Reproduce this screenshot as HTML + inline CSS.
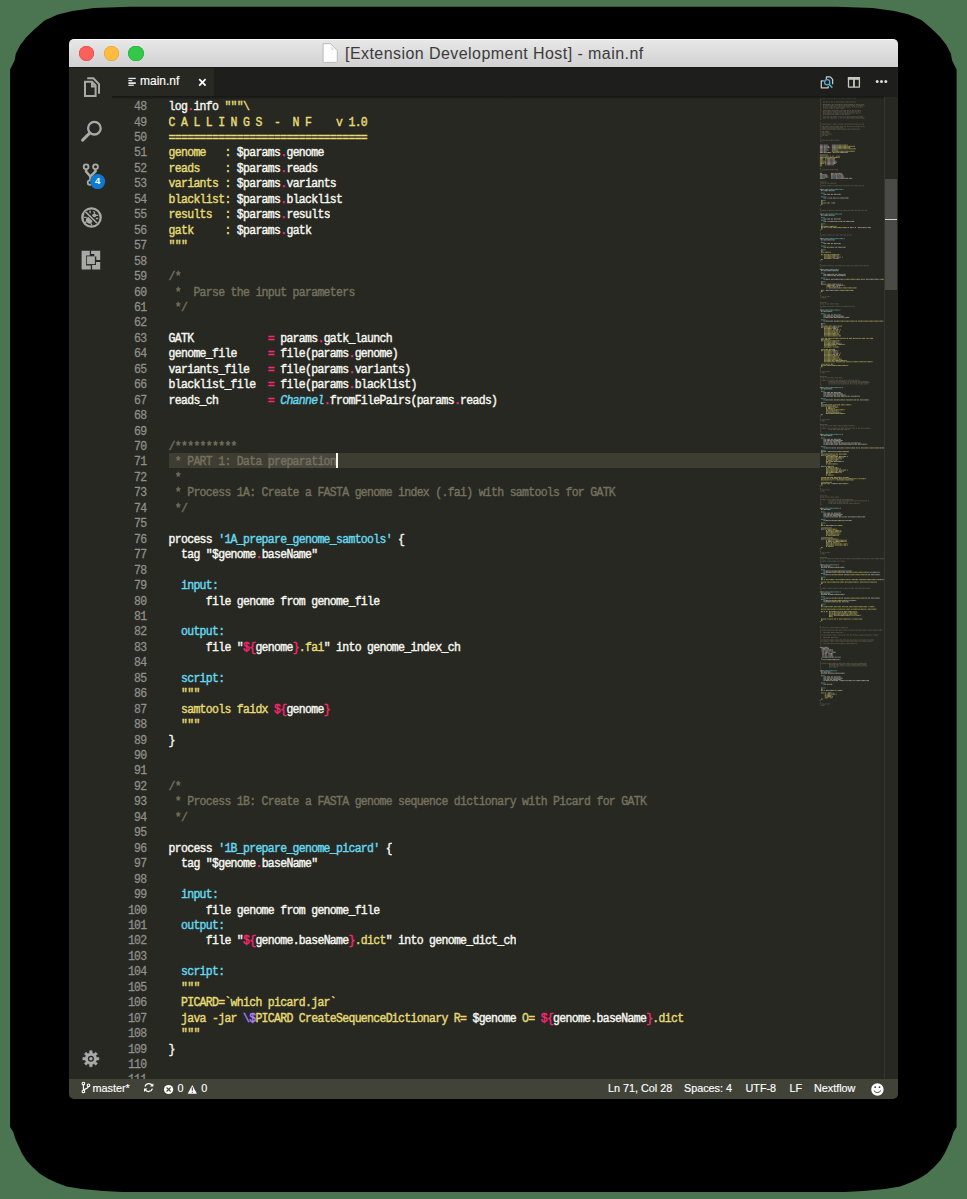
<!DOCTYPE html>
<html><head><meta charset="utf-8"><style>
html,body{margin:0;padding:0;width:967px;height:1199px;overflow:hidden;background:#4b7550;position:relative;}
div,span{box-sizing:border-box;}
.a{position:absolute;}
#shadow{position:absolute;left:10px;top:7px;width:947px;height:1185px;background:#000;border-radius:95px / 64px;}
#title{position:absolute;left:69px;top:39.3px;width:829px;height:28.5px;background:linear-gradient(#e7e7e7 0,#dedede 40%,#d2d1d3 100%);border-radius:5px 5px 0 0;border-top:1.5px solid #f9f9f9;border-bottom:1.2px solid #1a1a18;}
.tl{position:absolute;top:45.6px;width:15.2px;height:15.2px;border-radius:50%;}
#ttext{position:absolute;left:345px;top:44.5px;font:16px "Liberation Sans",sans-serif;letter-spacing:0.44px;color:#3b3b3b;white-space:pre;}
#body{position:absolute;left:69px;top:67px;width:829px;height:1012px;background:#272822;}
#tabs{position:absolute;left:112px;top:67.5px;width:786px;height:29px;background:#1e1f1c;}
#tab{position:absolute;left:112px;top:67.5px;width:102px;height:28.5px;background:#272822;}
#tabtext{position:absolute;left:140px;top:74px;font:12px "Liberation Sans",sans-serif;color:#fff;white-space:pre;-webkit-text-stroke:0.15px #fff;}
#status{position:absolute;left:69px;top:1079px;width:829px;height:20px;background:#414339;border-radius:0 0 5px 5px;}
.st{position:absolute;top:1082px;font:10.8px "Liberation Sans",sans-serif;color:#fff;white-space:pre;-webkit-text-stroke:0.15px #fff;}
.ln{position:absolute;left:113px;width:33.5px;text-align:right;height:15.45px;line-height:15.45px;font:11.5px "Liberation Mono",monospace;letter-spacing:-0.7px;-webkit-text-stroke:0.25px currentColor;color:#90908a;white-space:pre;transform:scaleY(1.12);transform-origin:0 4px;}
.cl{position:absolute;left:168.6px;height:15.45px;line-height:15.45px;font:11.5px "Liberation Mono",monospace;letter-spacing:-0.7px;-webkit-text-stroke:0.38px currentColor;color:#f8f8f2;white-space:pre;transform:scaleY(1.12);transform-origin:0 4px;}
.y{color:#e6db74}.w{color:#f8f8f2}.p{color:#f92672}.c{color:#66d9ef}.u{color:#ae81ff}.m{color:#75715e}.i{color:#66d9ef;font-style:italic}
.sel{color:#75715e;background:#49483e}
#hl{position:absolute;left:169px;top:452.9px;width:651px;height:15.3px;background:#3e3d32;}
#cursor{position:absolute;left:335.5px;top:452.9px;width:2px;height:15.3px;background:#f8f8f0;}
#edclip{position:absolute;left:112px;top:97px;width:786px;height:982px;overflow:hidden;}
#scroll{position:absolute;left:884px;top:97px;width:14px;height:982px;border-left:1px solid #34352f;}
#slider{position:absolute;left:885px;top:178.7px;width:12px;height:111.5px;background:#4a4b46;}
#tabshadow{position:absolute;left:112px;top:96px;width:772px;height:2.5px;background:linear-gradient(#171814,rgba(23,24,20,0.3));}
.ic{position:absolute;left:0;top:0;}
</style></head><body>
<svg class="ic" width="967" height="1199"><path d="M10.1 69.5 L14.5 60.8 L15.9 53.6 L20.3 44.9 L26.1 37.6 L34.7 29.0 L44.9 20.3 L57.9 14.5 L72.4 10.9 L94.1 8.0 L130.3 6.8 L836.4 6.8 L872.6 8.0 L894.3 10.9 L908.8 14.5 L921.8 20.3 L932.0 29.0 L940.6 37.6 L946.4 44.9 L950.8 53.6 L952.2 60.8 L956.6 69.5 L956.6 1127.0 L953.5 1132.0 L951.0 1139.7 L947.9 1146.5 L944.8 1153.3 L940.4 1160.2 L934.2 1167.0 L926.8 1173.8 L918.7 1178.8 L909.4 1183.1 L900.1 1186.5 L884.9 1189.0 L863.2 1191.0 L844.4 1192.0 L122.3 1192.0 L103.5 1191.0 L81.8 1189.0 L66.6 1186.5 L57.3 1183.1 L48.0 1178.8 L39.9 1173.8 L32.5 1167.0 L26.3 1160.2 L21.9 1153.3 L18.8 1146.5 L15.7 1139.7 L13.2 1132.0 L10.1 1127.0Z" fill="#000"/></svg>
<div id="body"></div>
<div id="title"></div>
<div class="tl" style="left:79px;background:#fc605c;box-shadow:inset 0 0 0 0.6px #df4744"></div>
<div class="tl" style="left:103.7px;background:#fdbc40;box-shadow:inset 0 0 0 0.6px #de9f34"></div>
<div class="tl" style="left:128.4px;background:#34c84a;box-shadow:inset 0 0 0 0.6px #27aa35"></div>
<svg class="ic" width="967" height="80"><path d="M323.1 43.7H330.5L337.3 50.5V61.5Q337.3 62.4 336.4 62.4H324Q323.1 62.4 323.1 61.5Z" fill="#fdfdfd" stroke="#b4b4b4" stroke-width="0.9"/><path d="M331.3 46.6L334.4 49.7H331.3Z" fill="#dcdcdc"/></svg>
<div id="ttext">[Extension Development Host] - main.nf</div>
<div id="tabs"></div>
<div id="tab"></div>
<div id="tabtext">main.nf</div>
<svg class="ic" width="967" height="300">
 <g fill="#e6e6e6"><rect x="128.4" y="77.8" width="7.4" height="1.3"/><rect x="128.4" y="80" width="4" height="1.2"/><rect x="128.4" y="82.2" width="7.4" height="1.8"/><rect x="128.4" y="84.7" width="5.4" height="1.2"/></g>
 <path d="M199.2 79.2L205.6 85.6M205.6 79.2L199.2 85.6" stroke="#fff" stroke-width="1.7"/>
 <!-- activity icons -->
 <g fill="none" stroke="#a9a9a5" stroke-width="2">
  <path d="M85 81.7H92L95.6 85.4V96H85Z"/>
  <path d="M92 81.7V86.4H95.6"/>
  <path d="M87.2 78.3H93.4L99 84.1V93.7"/>
  <circle cx="94.4" cy="128.2" r="6.3" stroke-width="2.3"/>
  <path d="M89.4 133.4L82.6 140.1" stroke-width="3" stroke-linecap="round"/>
  <circle cx="86.1" cy="166.7" r="2.4" stroke-width="1.8"/>
  <circle cx="95.5" cy="166.7" r="2.4" stroke-width="1.8"/>
  <circle cx="90" cy="182.6" r="2.3" stroke-width="1.8"/>
  <path d="M86.1 169.2V171.5L90.4 176.4V180.3M95.5 169.2V171.5L90.4 176.4" stroke-width="2.5"/>
  <circle cx="91.5" cy="217.5" r="9.2" stroke-width="2.3"/>
 </g>
 <g fill="#a9a9a5">
  <path d="M92 81.7L95.6 85.4H92Z"/>
  <ellipse cx="89.2" cy="220.3" rx="3.1" ry="3.4" transform="rotate(-40 89.2 220.3)"/>
  <ellipse cx="94.3" cy="215.3" rx="2.1" ry="1.9"/>
  <path d="M90.1 210.6V213.2M93.6 211.2L94.9 213.3M95.3 215.4H98.2M95.8 218.5H98.2M83.6 217.4H86.6M91 223.4L91.9 225.4M84.6 222.8L86.6 221.6" stroke="#a9a9a5" stroke-width="1.3" fill="none"/>
  <path d="M85.3 211.6L97.2 223.2" stroke="#272822" stroke-width="3.4"/>
  <path d="M85.3 211.6L97.2 223.2" stroke="#a9a9a5" stroke-width="1.6"/>
  <path d="M81.6 250.7H89.8V255.4H86.1V265.5H90.8V269.5H81.6Z"/>
  <rect x="86.9" y="256.3" width="8" height="7.8"/>
  <path d="M91.1 250.7H100.2V259.9H96.3V256.4H94.3V254H91.1Z"/>
  <path d="M96 261.9H100.2V269.5H92.1V265H96Z"/>
 </g>
 <g fill="#0e7ad0"><circle cx="97.7" cy="181.6" r="7.5"/></g>
 <text x="97.6" y="184.4" font-family="Liberation Sans" font-weight="bold" font-size="9.5" fill="#fff" text-anchor="middle">4</text>
 <!-- right tab icons -->
 <g fill="none" stroke="#c8c8c3" stroke-width="1.3" stroke-linejoin="round">
  <path d="M826.4 79.6V76.9H830.2L832.6 79.4V84.3"/>
  <path d="M823.8 80.9H821.3V87.8H828.2V86.3"/>
  <rect x="848.5" y="77.6" width="10.9" height="9.5" stroke-width="1.3"/>
  <path d="M853.95 78V87" stroke-width="1.8"/>
 </g>
 <rect x="847.9" y="77" width="12.1" height="2.8" fill="#c8c8c3"/>
 <g fill="none" stroke="#56aee0" stroke-width="1.3"><circle cx="827.2" cy="82.2" r="2.6"/><path d="M829.1 84.2L832.3 87.7" stroke-width="1.5"/></g>
 <g fill="#dcdcd8"><circle cx="877.2" cy="81.6" r="1.5"/><circle cx="881.5" cy="81.6" r="1.5"/><circle cx="885.8" cy="81.6" r="1.5"/></g>
</svg>
<div id="hl"></div>
<svg class="ic" width="967" height="1199" style="pointer-events:none">
<path d="M819.9 97.10h1.2M820.5 98.33h0.6M821.7 98.33h5.5M827.9 98.33h1.8M830.4 98.33h3.1M834.0 98.33h3.7M838.4 98.33h1.8M840.8 98.33h4.3M845.7 98.33h6.1M852.5 98.33h3.7M820.5 99.56h0.6M820.5 100.79h0.6M820.5 102.02h0.6M823.0 102.02h2.5M826.0 102.02h2.5M829.1 102.02h1.2M831.0 102.02h2.5M834.0 102.02h1.2M835.9 102.02h8.0M844.5 102.02h4.9M850.0 102.02h1.8M852.5 102.02h3.1M820.5 103.25h0.6M820.5 104.49h0.6M823.0 104.49h6.8M830.4 104.49h1.2M832.2 104.49h2.5M835.3 104.49h5.5M841.4 104.49h1.8M843.9 104.49h1.8M846.3 104.49h7.4M854.3 104.49h1.2M856.2 104.49h3.7M860.5 104.49h3.7M820.5 105.72h0.6M823.0 105.72h1.2M824.8 105.72h3.1M828.5 105.72h1.8M831.0 105.72h3.1M834.7 105.72h1.2M836.5 105.72h1.8M839.0 105.72h1.8M841.4 105.72h4.3M846.3 105.72h3.7M850.6 105.72h4.3M855.6 105.72h1.2M857.4 105.72h5.5M863.6 105.72h1.2M820.5 106.95h0.6M823.0 106.95h1.8M825.4 106.95h2.5M828.5 106.95h4.9M834.0 106.95h6.8M841.4 106.95h3.7M845.7 106.95h4.3M850.6 106.95h0.6M851.9 106.95h1.2M853.7 106.95h1.8M856.2 106.95h4.9M861.7 106.95h1.2M820.5 108.18h0.6M823.0 108.18h1.8M825.4 108.18h2.5M828.5 108.18h4.3M833.4 108.18h1.8M835.9 108.18h3.1M839.6 108.18h4.9M820.5 109.41h0.6M820.5 110.64h0.6M823.0 110.64h6.8M830.4 110.64h1.2M832.2 110.64h6.8M839.6 110.64h1.2M841.4 110.64h1.8M843.9 110.64h2.5M847.0 110.64h2.5M850.0 110.64h1.2M851.9 110.64h2.5M855.0 110.64h1.2M856.8 110.64h4.3M820.5 111.87h0.6M823.0 111.87h1.8M825.4 111.87h4.3M830.4 111.87h1.8M832.8 111.87h5.5M839.0 111.87h4.3M843.9 111.87h2.5M847.0 111.87h1.8M849.4 111.87h4.3M854.3 111.87h4.9M859.9 111.87h1.2M820.5 113.10h0.6M823.0 113.10h9.2M832.8 113.10h1.2M834.7 113.10h4.3M839.6 113.10h1.8M842.0 113.10h0.6M843.3 113.10h6.1M850.0 113.10h4.9M856.2 113.10h1.8M858.6 113.10h1.8M820.5 114.33h0.6M823.0 114.33h1.8M825.4 114.33h4.3M830.4 114.33h3.7M834.7 114.33h4.3M839.6 114.33h1.8M842.0 114.33h2.5M845.1 114.33h4.9M820.5 115.56h0.6M820.5 116.80h0.6M823.0 116.80h1.8M825.4 116.80h3.7M829.7 116.80h2.5M832.8 116.80h4.9M838.4 116.80h0.6M839.6 116.80h2.5M842.7 116.80h1.2M844.5 116.80h1.8M847.0 116.80h1.8M849.4 116.80h4.3M854.3 116.80h3.7M858.6 116.80h4.3M820.5 118.03h0.6M823.0 118.03h3.1M826.7 118.03h2.5M829.7 118.03h7.4M838.4 118.03h1.2M840.2 118.03h2.5M843.3 118.03h1.8M845.7 118.03h19.1M820.5 119.26h1.2M819.9 122.95h1.2M820.5 124.18h0.6M821.7 124.18h8.0M830.4 124.18h0.6M831.6 124.18h0.6M832.8 124.18h4.9M838.4 124.18h4.9M843.9 124.18h1.8M846.3 124.18h4.3M851.3 124.18h4.3M856.2 124.18h2.5M859.3 124.18h1.8M861.7 124.18h2.5M820.5 125.41h0.6M820.5 126.64h0.6M821.7 126.64h2.5M824.8 126.64h4.9M830.4 126.64h2.5M833.4 126.64h6.1M840.2 126.64h3.1M843.9 126.64h2.5M847.0 126.64h1.8M849.4 126.64h2.5M852.5 126.64h2.5M855.6 126.64h4.9M861.1 126.64h1.2M862.9 126.64h1.8M820.5 127.88h0.6M821.7 127.88h4.3M826.7 127.88h2.5M829.7 127.88h3.7M834.0 127.88h2.5M837.1 127.88h6.1M820.5 129.11h0.6M821.7 129.11h38.1M820.5 130.34h0.6M820.5 131.57h0.6M821.7 131.57h2.5M824.8 131.57h4.3M820.5 132.80h0.6M821.7 132.80h3.7M826.0 132.80h4.3M820.5 134.03h0.6M821.7 134.03h3.1M825.4 134.03h1.2M827.3 134.03h4.3M820.5 135.26h0.6M821.7 135.26h2.5M824.8 135.26h3.7M820.5 136.49h1.2M819.9 138.95h1.2M820.5 140.19h0.6M821.7 140.19h3.7M826.0 140.19h1.8M828.5 140.19h4.3M833.4 140.19h6.1M820.5 141.42h1.2M819.9 168.50h1.2M820.5 169.73h0.6M822.4 169.73h3.1M826.0 169.73h1.8M828.5 169.73h3.1M832.2 169.73h6.2M820.5 170.96h1.2M819.9 182.04h6.8M820.5 183.27h0.6M821.7 183.27h2.5M824.8 183.27h1.2M826.7 183.27h2.5M829.7 183.27h6.8M820.5 184.50h0.6M820.5 185.73h0.6M821.7 185.73h4.3M826.7 185.73h1.8M829.1 185.73h3.7M833.4 185.73h0.6M834.7 185.73h3.1M838.4 185.73h3.7M842.7 185.73h3.1M846.3 185.73h3.7M850.6 185.73h2.5M853.7 185.73h4.9M859.3 185.73h1.8M861.7 185.73h2.5M820.5 186.96h1.2M819.9 209.12h1.2M820.5 210.35h0.6M821.7 210.35h4.3M826.7 210.35h1.8M829.1 210.35h3.7M833.4 210.35h0.6M834.7 210.35h3.1M838.4 210.35h3.7M842.7 210.35h4.9M848.2 210.35h6.1M855.0 210.35h2.5M858.0 210.35h3.7M862.3 210.35h1.8M864.8 210.35h2.5M820.5 211.58h1.2M819.9 233.74h1.2M820.5 234.97h0.6M821.7 234.97h4.3M826.7 234.97h1.8M829.1 234.97h3.7M833.4 234.97h1.8M835.9 234.97h3.7M840.2 234.97h3.1M843.9 234.97h2.5M847.0 234.97h1.8M849.4 234.97h2.5M820.5 236.20h1.2M819.9 264.52h1.2M820.5 265.75h0.6M821.7 265.75h4.3M826.7 265.75h1.8M829.1 265.75h3.7M833.4 265.75h0.6M834.7 265.75h2.5M837.7 265.75h6.1M844.5 265.75h1.8M847.0 265.75h4.9M852.5 265.75h1.8M855.0 265.75h4.3M859.9 265.75h1.8M862.3 265.75h1.2M864.2 265.75h4.9M820.5 266.98h1.2M819.9 295.29h1.2M820.5 296.52h0.6M822.4 296.52h1.8M824.8 296.52h1.2M826.7 296.52h2.5M829.7 296.52h0.6M820.5 297.75h6.1M819.9 302.68h6.8M820.5 303.91h0.6M821.7 303.91h2.5M824.8 303.91h1.2M826.7 303.91h2.5M829.7 303.91h4.3M834.7 303.91h4.3M820.5 305.14h0.6M820.5 306.37h0.6M821.7 306.37h4.3M826.7 306.37h1.2M828.5 306.37h3.1M832.2 306.37h4.3M837.1 306.37h3.1M840.8 306.37h1.2M842.7 306.37h1.8M845.1 306.37h3.7M849.4 306.37h2.5M852.5 306.37h2.5M820.5 307.60h1.2M819.9 370.38h1.2M820.5 371.61h0.6M822.4 371.61h1.8M824.8 371.61h1.2M826.7 371.61h2.5M829.7 371.61h0.6M820.5 372.84h4.3M819.9 376.54h6.8M820.5 377.77h0.6M821.7 377.77h2.5M824.8 377.77h1.2M826.7 377.77h2.5M829.7 377.77h4.3M834.7 377.77h3.7M839.0 377.77h3.1M820.5 379.00h0.6M820.5 380.23h0.6M821.7 380.23h4.3M826.7 380.23h1.2M828.5 380.23h3.1M832.2 380.23h3.1M835.9 380.23h2.5M839.0 380.23h4.3M843.9 380.23h1.2M845.7 380.23h1.2M847.6 380.23h3.1M851.3 380.23h3.1M855.0 380.23h4.3M820.5 381.46h0.6M828.5 381.46h4.3M833.4 381.46h1.8M835.9 381.46h1.8M838.4 381.46h3.1M842.0 381.46h3.7M846.3 381.46h0.6M847.6 381.46h1.2M849.4 381.46h1.8M851.9 381.46h3.7M856.2 381.46h1.2M858.0 381.46h0.6M859.3 381.46h3.1M862.9 381.46h5.5M820.5 382.69h0.6M828.5 382.69h2.5M831.6 382.69h6.2M838.4 382.69h1.2M840.2 382.69h1.8M842.7 382.69h4.9M848.2 382.69h1.2M850.0 382.69h1.8M852.5 382.69h4.9M858.0 382.69h2.5M861.1 382.69h8.6M820.5 383.92h0.6M828.5 383.92h1.8M831.0 383.92h4.9M836.5 383.92h3.7M840.8 383.92h6.8M848.2 383.92h1.2M850.0 383.92h1.8M852.5 383.92h1.2M854.3 383.92h1.2M856.2 383.92h1.8M858.6 383.92h4.9M864.2 383.92h3.7M820.5 385.15h1.2M819.9 418.39h1.2M820.5 419.62h0.6M822.4 419.62h1.8M824.8 419.62h1.2M826.7 419.62h2.5M829.7 419.62h0.6M820.5 420.85h4.3M819.9 424.55h7.4M820.5 425.78h0.6M821.7 425.78h2.5M824.8 425.78h1.2M826.7 425.78h2.5M829.7 425.78h2.5M832.8 425.78h4.3M837.7 425.78h3.1M841.4 425.78h8.0M850.0 425.78h4.9M820.5 427.01h0.6M820.5 428.24h0.6M821.7 428.24h4.3M826.7 428.24h1.2M828.5 428.24h2.5M831.6 428.24h6.8M839.0 428.24h1.2M840.8 428.24h3.7M845.1 428.24h6.1M851.9 428.24h3.7M856.2 428.24h1.2M858.0 428.24h2.5M861.1 428.24h4.3M866.0 428.24h4.3M820.5 429.47h0.6M828.5 429.47h3.7M832.8 429.47h3.7M837.1 429.47h6.1M843.9 429.47h1.8M846.3 429.47h3.1M820.5 430.70h0.6M820.5 431.93h1.2M819.9 488.56h1.2M820.5 489.79h0.6M822.4 489.79h1.8M824.8 489.79h1.2M826.7 489.79h2.5M829.7 489.79h0.6M820.5 491.02h4.3M819.9 495.94h7.4M820.5 497.18h0.6M821.7 497.18h2.5M824.8 497.18h1.2M826.7 497.18h2.5M829.7 497.18h4.3M834.7 497.18h4.3M820.5 498.41h0.6M820.5 499.64h0.6M821.7 499.64h4.3M826.7 499.64h1.2M828.5 499.64h2.5M831.6 499.64h4.9M837.1 499.64h2.5M840.2 499.64h2.5M843.3 499.64h9.8M820.5 500.87h0.6M828.5 500.87h3.1M832.2 500.87h2.5M835.3 500.87h1.8M837.7 500.87h3.7M842.0 500.87h8.6M851.3 500.87h1.8M853.7 500.87h3.1M857.4 500.87h4.3M862.3 500.87h4.9M867.9 500.87h1.2M820.5 502.10h0.6M828.5 502.10h6.1M835.3 502.10h1.2M837.1 502.10h1.2M839.0 502.10h3.7M843.3 502.10h4.3M820.5 503.33h0.6M828.5 503.33h3.7M832.8 503.33h3.7M837.1 503.33h4.9M842.7 503.33h2.5M845.7 503.33h2.5M848.8 503.33h11.1M820.5 504.56h1.2M819.9 551.34h1.2M820.5 552.57h0.6M822.4 552.57h1.8M824.8 552.57h1.2M826.7 552.57h2.5M829.7 552.57h0.6M820.5 553.80h4.3M819.9 557.49h7.4M820.5 558.73h0.6M821.7 558.73h2.5M824.8 558.73h1.2M826.7 558.73h7.4M834.7 558.73h4.9M840.2 558.73h2.5M843.3 558.73h1.8M845.7 558.73h4.3M850.6 558.73h1.8M853.1 558.73h9.2M862.9 558.73h6.2M869.7 558.73h1.8M872.2 558.73h1.8M874.6 558.73h4.3M879.6 558.73h4.4M820.5 559.96h0.6M820.5 561.19h0.6M821.7 561.19h4.3M826.7 561.19h1.8M829.1 561.19h7.4M837.1 561.19h1.8M839.6 561.19h1.8M842.0 561.19h3.7M820.5 562.42h1.2M819.9 587.04h1.2M820.5 588.27h0.6M821.7 588.27h4.3M826.7 588.27h1.8M829.1 588.27h4.3M834.0 588.27h4.9M839.6 588.27h2.5M842.7 588.27h1.8M845.1 588.27h3.7M849.4 588.27h4.9M855.0 588.27h6.2M861.7 588.27h3.1M865.4 588.27h4.9M820.5 589.50h1.2M819.9 626.43h1.2M820.5 627.66h0.6M821.7 627.66h3.1M825.4 627.66h2.5M828.5 627.66h1.8M831.0 627.66h9.2M840.8 627.66h6.8M820.5 628.89h0.6M820.5 630.12h0.6M821.7 630.12h1.8M824.2 630.12h9.8M834.7 630.12h3.7M839.0 630.12h3.7M843.3 630.12h3.7M847.6 630.12h1.8M850.0 630.12h5.5M856.2 630.12h6.2M862.9 630.12h4.3M867.9 630.12h1.8M870.3 630.12h3.1M874.0 630.12h4.3M878.9 630.12h3.7M820.5 631.35h0.6M820.5 632.59h0.6M823.0 632.59h0.6M824.2 632.59h6.2M831.0 632.59h5.5M837.1 632.59h4.9M842.7 632.59h0.6M820.5 633.82h0.6M820.5 635.05h0.6M821.7 635.05h1.8M824.2 635.05h8.0M832.8 635.05h4.3M837.7 635.05h3.1M841.4 635.05h3.7M845.7 635.05h3.7M850.0 635.05h1.8M852.5 635.05h5.5M858.6 635.05h6.1M865.4 635.05h4.3M870.3 635.05h1.8M872.8 635.05h1.8M875.2 635.05h3.1M820.5 636.28h0.6M820.5 637.51h0.6M823.0 637.51h0.6M824.2 637.51h6.2M831.0 637.51h6.1M837.7 637.51h0.6M820.5 638.74h0.6M820.5 639.97h0.6M821.7 639.97h1.8M824.2 639.97h2.5M827.3 639.97h1.8M829.7 639.97h4.3M834.7 639.97h4.9M840.2 639.97h1.8M842.7 639.97h3.7M847.0 639.97h2.5M850.0 639.97h2.5M853.1 639.97h3.7M857.4 639.97h1.8M859.9 639.97h2.5M862.9 639.97h3.7M867.3 639.97h1.8M869.7 639.97h4.3M820.5 641.20h0.6M821.7 641.20h1.2M823.6 641.20h4.3M828.5 641.20h0.6M829.7 641.20h4.3M834.7 641.20h3.1M838.4 641.20h14.8M853.7 641.20h4.9M859.3 641.20h1.8M861.7 641.20h5.5M867.9 641.20h4.3M820.5 642.43h0.6M820.5 643.66h0.6M823.0 643.66h0.6M824.2 643.66h6.2M831.0 643.66h5.5M837.1 643.66h9.2M847.0 643.66h8.6M856.2 643.66h0.6M820.5 644.90h1.2M819.9 662.13h1.2M820.5 663.36h0.6M821.7 663.36h4.3M826.7 663.36h1.8M829.1 663.36h9.2M839.0 663.36h6.1M845.7 663.36h4.9M851.3 663.36h2.5M854.3 663.36h2.5M857.4 663.36h9.2M820.5 664.59h0.6M829.1 664.59h6.1M835.9 664.59h3.7M840.2 664.59h3.7M844.5 664.59h1.2M846.3 664.59h0.6M847.6 664.59h1.8M850.0 664.59h1.2M851.9 664.59h5.5M858.0 664.59h3.1M861.7 664.59h4.9M820.5 665.82h0.6M829.1 665.82h4.3M834.0 665.82h2.5M837.1 665.82h1.8M839.6 665.82h3.1M843.3 665.82h1.8M845.7 665.82h4.9M851.3 665.82h9.2M861.1 665.82h6.1M820.5 667.05h0.6M829.1 667.05h3.1M832.8 667.05h4.9M820.5 668.28h1.2M819.9 702.75h1.2M820.5 703.98h0.6M822.4 703.98h1.8M824.8 703.98h1.2M826.7 703.98h2.5M829.7 703.98h0.6M820.5 705.21h4.3" stroke="#75715e" stroke-width="1.00" stroke-opacity="0.65" stroke-dasharray="0.9 0.35" fill="none"/>
<path d="M819.9 145.11h3.7M824.2 145.11h3.7M832.2 145.11h0.6M832.8 145.11h4.9M847.0 145.11h0.6M819.9 146.34h3.7M824.2 146.34h4.9M832.2 146.34h0.6M832.8 146.34h4.9M854.3 146.34h0.6M819.9 147.57h3.7M824.2 147.57h5.5M832.2 147.57h0.6M832.8 147.57h4.9M849.4 147.57h0.6M819.9 148.80h3.7M824.2 148.80h3.1M832.2 148.80h0.6M832.8 148.80h4.9M855.0 148.80h0.6M819.9 150.03h3.7M824.2 150.03h4.3M832.2 150.03h0.6M837.1 150.03h0.6M819.9 151.26h3.7M824.2 151.26h2.5M819.9 152.50h3.7M824.2 152.50h6.8M832.8 152.50h0.6M839.6 152.50h7.4M847.0 152.50h0.6M819.9 154.96h1.8M822.4 154.96h2.5M826.7 158.65h4.3M831.6 158.65h3.7M826.7 159.88h4.3M831.6 159.88h3.1M826.7 161.11h4.3M831.6 161.11h4.9M826.7 162.34h4.3M831.6 162.34h5.5M826.7 163.57h4.3M831.6 163.57h4.3M826.7 164.81h4.3M831.6 164.81h2.5M819.9 173.42h2.5M831.0 173.42h3.7M835.3 173.42h6.8M819.9 174.65h6.8M831.0 174.65h6.8M838.4 174.65h4.3M819.9 175.88h8.0M831.0 175.88h6.8M838.4 175.88h5.5M819.9 177.12h8.6M831.0 177.12h6.8M838.4 177.12h6.1M819.9 178.35h4.9M835.9 178.35h12.3M848.8 178.35h3.7M819.9 189.43h4.3M842.7 189.43h0.6M821.1 190.66h1.8M823.6 190.66h4.9M829.1 190.66h5.5M823.6 194.35h2.5M826.7 194.35h3.7M831.0 194.35h2.5M834.0 194.35h6.8M823.6 198.04h2.5M826.7 198.04h0.6M828.5 198.04h3.7M835.3 198.04h0.6M836.5 198.04h2.5M839.6 198.04h9.2M831.6 202.97h3.7M819.9 205.43h0.6M819.9 214.05h4.3M841.4 214.05h0.6M821.1 215.28h1.8M823.6 215.28h4.9M829.1 215.28h5.5M823.6 218.97h2.5M826.7 218.97h3.7M831.0 218.97h2.5M834.0 218.97h6.8M823.6 221.43h2.5M826.7 221.43h0.6M828.5 221.43h9.2M841.4 221.43h0.6M842.7 221.43h2.5M845.7 221.43h8.6M850.0 227.59h4.3M858.0 227.59h9.2M819.9 230.05h0.6M819.9 238.66h4.3M843.9 238.66h0.6M821.1 239.90h1.8M823.6 239.90h0.6M824.2 239.90h9.8M834.0 239.90h0.6M823.6 243.59h2.5M826.7 243.59h3.7M831.0 243.59h2.5M834.0 243.59h6.8M823.6 247.28h2.5M826.7 247.28h0.6M833.4 247.28h0.6M834.7 247.28h2.5M837.7 247.28h8.0M837.1 257.13h3.7M833.4 258.36h5.5M819.9 260.82h0.6M819.9 269.44h4.3M838.4 269.44h0.6M821.1 270.67h1.8M823.6 270.67h0.6M824.2 270.67h13.5M837.7 270.67h0.6M823.6 274.36h2.5M826.7 274.36h7.4M834.7 274.36h2.5M837.7 274.36h8.0M823.6 275.60h2.5M826.7 275.60h6.8M834.0 275.60h2.5M837.1 275.60h8.6M823.6 279.29h1.8M826.0 279.29h3.1M829.1 279.29h0.6M831.0 279.29h12.9M858.6 279.29h0.6M859.3 279.29h1.2M861.1 279.29h3.1M864.2 279.29h0.6M866.0 279.29h12.9M831.6 284.21h8.0M836.5 285.44h6.8M829.1 287.90h12.9M826.0 290.37h12.9M819.9 292.83h0.6M819.9 310.06h4.3M839.6 310.06h0.6M821.1 311.29h1.8M823.6 311.29h0.6M824.2 311.29h7.4M831.6 311.29h0.6M823.6 314.99h2.5M826.7 314.99h3.7M831.0 314.99h2.5M834.0 314.99h6.8M823.6 316.22h2.5M826.7 316.22h5.5M832.8 316.22h2.5M835.9 316.22h8.0M823.6 317.45h1.8M826.0 317.45h7.4M834.0 317.45h6.8M841.4 317.45h2.5M844.5 317.45h4.9M823.6 321.14h1.8M826.0 321.14h7.4M834.0 321.14h3.1M856.2 321.14h1.2M858.0 321.14h3.1M882.6 321.14h0.6M883.9 321.14h0.1M831.6 327.30h6.2M832.8 328.53h3.7M833.4 329.76h5.5M835.9 343.30h4.3M833.4 346.99h5.5M832.8 351.92h3.7M833.4 353.15h5.5M837.7 361.76h7.4M819.9 367.92h0.6M819.9 387.62h4.3M842.0 387.62h0.6M821.1 388.85h1.8M823.6 388.85h0.6M824.2 388.85h7.4M831.6 388.85h0.6M823.6 392.54h2.5M826.7 392.54h3.7M831.0 392.54h2.5M834.0 392.54h6.8M823.6 393.77h2.5M826.7 393.77h3.1M830.4 393.77h2.5M833.4 393.77h9.2M823.6 395.00h2.5M826.7 395.00h6.8M834.0 395.00h2.5M837.1 395.00h8.6M823.6 396.23h1.8M826.0 396.23h7.4M834.0 396.23h6.1M840.8 396.23h6.8M848.2 396.23h2.5M851.3 396.23h8.6M823.6 399.93h1.8M826.0 399.93h7.4M834.0 399.93h3.1M843.9 399.93h1.2M845.7 399.93h3.1M855.6 399.93h0.6M856.8 399.93h2.5M859.9 399.93h9.2M821.1 406.08h3.1M827.9 407.31h4.3M834.7 407.31h2.5M819.9 415.93h0.6M819.9 434.39h4.3M842.0 434.39h0.6M821.1 435.62h1.8M823.6 435.62h0.6M824.2 435.62h7.4M831.6 435.62h0.6M823.6 439.32h2.5M826.7 439.32h3.7M831.0 439.32h2.5M834.0 439.32h6.8M823.6 440.55h2.5M826.7 440.55h3.1M830.4 440.55h2.5M833.4 440.55h9.2M823.6 441.78h2.5M826.7 441.78h2.5M829.7 441.78h2.5M832.8 441.78h8.6M823.6 443.01h1.8M826.0 443.01h7.4M834.0 443.01h6.1M840.8 443.01h6.8M848.2 443.01h2.5M851.3 443.01h9.2M823.6 444.24h1.8M826.0 444.24h12.3M839.0 444.24h15.4M855.0 444.24h2.5M858.0 444.24h9.2M823.6 447.94h1.8M826.0 447.94h5.5M832.2 447.94h3.1M835.3 447.94h0.6M837.1 447.94h6.8M853.7 447.94h0.6M854.3 447.94h1.2M856.2 447.94h3.1M859.3 447.94h0.6M861.1 447.94h6.8M880.2 447.94h0.6M880.8 447.94h0.6M882.0 447.94h2.0M821.1 451.63h4.9M827.9 451.63h6.8M835.3 451.63h11.7M848.2 451.63h0.6M821.1 455.32h3.1M839.0 456.55h7.4M827.9 460.25h4.3M834.7 460.25h2.5M834.0 461.48h8.6M821.1 466.40h3.1M827.9 467.63h4.3M834.7 467.63h2.5M839.0 470.09h7.4M837.1 479.94h6.8M831.6 483.63h6.8M819.9 486.10h0.6M819.9 508.25h4.3M840.2 508.25h0.6M821.1 509.49h1.8M823.6 509.49h0.6M824.2 509.49h5.5M829.7 509.49h0.6M823.6 513.18h2.5M826.7 513.18h3.7M831.0 513.18h2.5M834.0 513.18h6.8M823.6 514.41h2.5M826.7 514.41h3.1M830.4 514.41h2.5M833.4 514.41h9.2M823.6 515.64h2.5M826.7 515.64h2.5M829.7 515.64h2.5M832.8 515.64h8.6M823.6 516.87h1.8M826.0 516.87h5.5M832.2 516.87h6.2M839.0 516.87h5.5M845.1 516.87h2.5M848.2 516.87h9.2M858.0 516.87h7.4M823.6 520.56h1.8M826.0 520.56h5.5M832.2 520.56h3.1M842.0 520.56h0.6M843.3 520.56h2.5M846.3 520.56h5.5M826.0 525.49h8.6M821.1 529.18h3.1M827.9 530.41h4.3M821.1 539.03h3.1M827.9 540.26h4.3M827.9 541.49h4.3M819.9 548.88h0.6M819.9 564.88h4.3M838.4 564.88h0.6M821.1 566.11h1.8M823.6 566.11h0.6M824.2 566.11h5.5M829.7 566.11h0.6M821.1 567.34h6.1M827.9 567.34h0.6M828.5 567.34h9.2M838.4 567.34h5.5M843.9 567.34h0.6M823.6 571.04h1.8M826.0 571.04h5.5M832.2 571.04h3.1M842.0 571.04h0.6M843.3 571.04h2.5M846.3 571.04h5.5M823.6 572.27h1.8M826.0 572.27h3.1M843.9 572.27h1.2M845.7 572.27h3.1M866.0 572.27h0.6M867.3 572.27h2.5M870.3 572.27h9.2M823.6 574.73h1.8M826.0 574.73h5.5M832.2 574.73h3.1M842.0 574.73h1.2M843.9 574.73h3.1M866.6 574.73h0.6M867.9 574.73h2.5M870.9 574.73h9.2M856.2 579.65h1.2M859.9 579.65h1.8M862.9 579.65h1.2M878.3 579.65h1.8M819.9 584.58h0.6M819.9 591.96h4.3M840.2 591.96h0.6M821.1 593.19h1.8M823.6 593.19h0.6M824.2 593.19h5.5M829.7 593.19h0.6M821.1 594.42h6.1M827.9 594.42h0.6M828.5 594.42h9.2M838.4 594.42h5.5M843.9 594.42h0.6M823.6 598.12h1.8M826.0 598.12h5.5M832.2 598.12h3.1M842.0 598.12h1.2M843.9 598.12h3.1M866.6 598.12h0.6M867.9 598.12h2.5M870.9 598.12h9.2M823.6 600.58h1.8M826.0 600.58h5.5M832.2 600.58h3.1M845.1 600.58h0.6M846.3 600.58h2.5M849.4 600.58h6.8M823.6 601.81h3.1M837.7 601.81h0.6M839.0 601.81h2.5M842.0 601.81h6.8M854.3 612.89h1.2M838.4 614.12h1.2M843.3 614.12h1.2M850.0 614.12h1.2M834.0 615.35h1.2M838.4 615.35h1.2M842.0 615.35h1.2M819.9 621.51h0.6M819.9 647.36h8.6M821.7 648.59h7.4M821.7 649.82h11.1M821.7 651.05h2.5M824.8 651.05h3.1M828.5 651.05h3.1M832.2 651.05h1.2M822.4 652.28h1.8M824.8 652.28h4.9M831.6 652.28h4.3M822.4 653.51h1.8M824.8 653.51h1.8M828.5 653.51h4.3M822.4 654.74h1.8M824.8 654.74h1.8M828.5 654.74h4.3M822.4 655.97h1.8M824.8 655.97h1.8M828.5 655.97h4.9M822.4 657.21h9.2M832.2 657.21h2.5M835.3 657.21h2.5M838.4 657.21h2.5M821.1 658.44h0.6M821.7 659.67h1.8M824.2 659.67h0.6M825.4 659.67h13.5M839.6 659.67h0.6M819.9 670.75h4.3M836.5 670.75h0.6M821.1 671.98h1.8M823.6 671.98h0.6M824.2 671.98h5.5M829.7 671.98h0.6M821.1 673.21h6.1M827.9 673.21h0.6M828.5 673.21h9.2M838.4 673.21h5.5M843.9 673.21h0.6M823.6 676.90h2.5M826.7 676.90h3.7M831.0 676.90h2.5M834.0 676.90h6.8M823.6 678.13h2.5M826.7 678.13h3.1M830.4 678.13h2.5M833.4 678.13h9.2M823.6 679.36h2.5M826.7 679.36h2.5M829.7 679.36h2.5M832.8 679.36h8.6M823.6 680.59h1.8M826.0 680.59h5.5M832.2 680.59h6.2M839.6 680.59h6.2M846.3 680.59h5.5M852.5 680.59h2.5M855.6 680.59h13.5M823.6 684.29h2.5M826.7 684.29h0.6M831.6 684.29h0.6M826.0 690.44h8.6M821.1 692.90h3.1M827.9 692.90h3.7M830.4 697.83h1.8M819.9 700.29h0.6" stroke="#f8f8f2" stroke-width="1.00" stroke-opacity="0.55" stroke-dasharray="0.9 0.35" fill="none"/>
<path d="M823.6 145.11h0.6M831.0 145.11h0.6M823.6 146.34h0.6M831.0 146.34h0.6M823.6 147.57h0.6M831.0 147.57h0.6M823.6 148.80h0.6M831.0 148.80h0.6M823.6 150.03h0.6M831.0 150.03h0.6M823.6 151.26h0.6M831.0 151.26h0.6M823.6 152.50h0.6M831.6 152.50h0.6M821.7 154.96h0.6M831.0 158.65h0.6M831.0 159.88h0.6M831.0 161.11h0.6M831.0 162.34h0.6M831.0 163.57h0.6M831.0 164.81h0.6M829.7 173.42h0.6M834.7 173.42h0.6M829.7 174.65h0.6M837.7 174.65h0.6M829.7 175.88h0.6M837.7 175.88h0.6M829.7 177.12h0.6M837.7 177.12h0.6M829.7 178.35h0.6M835.3 178.35h0.6M848.2 178.35h0.6M828.5 190.66h0.6M827.3 198.04h1.2M832.2 198.04h0.6M830.4 202.97h1.2M835.3 202.97h0.6M828.5 215.28h0.6M827.3 221.43h1.2M837.7 221.43h0.6M856.8 227.59h1.2M867.3 227.59h0.6M835.9 257.13h1.2M840.8 257.13h0.6M832.2 258.36h1.2M839.0 258.36h0.6M829.7 279.29h1.2M843.9 279.29h0.6M864.8 279.29h1.2M878.9 279.29h0.6M835.3 285.44h1.2M843.3 285.44h0.6M827.9 287.90h1.2M842.0 287.90h0.6M824.8 290.37h1.2M839.0 290.37h0.6M832.2 329.76h1.2M839.0 329.76h0.6M832.2 346.99h1.2M839.0 346.99h0.6M832.2 353.15h1.2M839.0 353.15h0.6M835.9 447.94h1.2M843.9 447.94h0.6M859.9 447.94h1.2M867.9 447.94h0.6M826.7 451.63h0.6M834.7 451.63h0.6M835.9 479.94h1.2M843.9 479.94h0.6M830.4 483.63h1.2M838.4 483.63h0.6M857.4 516.87h0.6M824.8 525.49h1.2M834.7 525.49h0.6M821.1 648.59h0.6M821.1 649.82h0.6M821.1 651.05h0.6M830.4 652.28h0.6M827.3 653.51h0.6M827.3 654.74h0.6M827.3 655.97h0.6M821.1 659.67h0.6M824.8 690.44h1.2M834.7 690.44h0.6M826.7 692.90h1.2M831.6 692.90h0.6M829.1 697.83h1.2M832.2 697.83h0.6" stroke="#f92672" stroke-width="1.00" stroke-opacity="0.30" stroke-dasharray="0.9 0.35" fill="none"/>
<path d="M837.7 145.11h9.2M837.7 146.34h16.6M837.7 147.57h11.7M837.7 148.80h17.2M832.8 150.03h4.3M832.2 151.26h22.8M833.4 152.50h2.5M836.5 152.50h2.5M825.4 154.96h2.5M819.9 156.19h0.6M821.1 156.19h0.6M822.4 156.19h0.6M823.6 156.19h0.6M824.8 156.19h0.6M826.0 156.19h0.6M827.3 156.19h0.6M828.5 156.19h0.6M830.4 156.19h0.6M832.2 156.19h0.6M833.4 156.19h0.6M836.5 156.19h0.6M837.7 156.19h1.8M819.9 157.42h19.7M819.9 158.65h3.7M825.4 158.65h0.6M819.9 159.88h3.1M825.4 159.88h0.6M819.9 161.11h4.9M825.4 161.11h0.6M819.9 162.34h6.1M819.9 163.57h4.3M825.4 163.57h0.6M819.9 164.81h2.5M825.4 164.81h0.6M819.9 166.04h1.8M832.8 198.04h2.5M821.1 201.74h1.8M821.1 202.97h4.9M826.7 202.97h3.1M821.1 204.20h1.8M838.4 221.43h3.1M821.1 225.12h1.8M821.1 226.36h8.0M829.7 226.36h6.8M821.1 227.59h2.5M824.2 227.59h2.5M828.5 227.59h3.7M832.8 227.59h14.8M848.2 227.59h1.2M855.0 227.59h1.2M867.9 227.59h3.1M821.1 228.82h1.8M827.3 247.28h6.1M821.1 250.97h1.8M821.1 252.21h3.1M824.8 252.21h6.2M821.1 254.67h2.5M824.2 254.67h5.5M830.4 254.67h8.6M839.6 254.67h0.6M824.2 255.90h6.8M831.6 255.90h6.2M838.4 255.90h0.6M824.2 257.13h11.1M842.0 257.13h0.6M824.2 258.36h7.4M821.1 259.59h1.8M844.5 279.29h14.1M879.6 279.29h4.4M821.1 282.98h1.8M821.1 284.21h4.9M826.7 284.21h4.3M840.2 284.21h1.2M842.0 284.21h0.6M826.7 285.44h8.0M844.5 285.44h0.6M826.7 286.67h4.9M832.2 286.67h0.6M833.4 286.67h3.1M837.1 286.67h1.2M839.0 286.67h0.6M826.7 287.90h0.6M842.7 287.90h14.1M821.1 290.37h3.1M839.6 290.37h14.1M821.1 291.60h1.8M837.1 321.14h19.1M861.1 321.14h21.5M821.1 324.84h1.8M821.1 326.07h0.6M822.4 326.07h6.1M829.1 326.07h3.1M832.8 326.07h3.1M836.5 326.07h1.2M838.4 326.07h3.7M821.1 327.30h2.5M824.2 327.30h6.8M838.4 327.30h0.6M824.2 328.53h8.0M837.1 328.53h0.6M824.2 329.76h7.4M840.2 329.76h0.6M824.2 330.99h11.1M835.9 330.99h2.5M839.0 330.99h0.6M824.2 332.22h9.2M834.0 332.22h4.3M839.0 332.22h0.6M824.2 333.45h12.3M837.1 333.45h0.6M838.4 333.45h0.6M824.2 334.68h13.5M838.4 334.68h0.6M839.6 334.68h0.6M824.2 335.91h14.1M839.0 335.91h1.8M821.1 338.38h0.6M822.4 338.38h1.8M824.8 338.38h2.5M827.9 338.38h4.9M833.4 338.38h5.5M839.6 338.38h3.1M843.3 338.38h3.1M847.0 338.38h1.2M848.8 338.38h3.7M853.1 338.38h5.5M859.3 338.38h1.8M861.7 338.38h3.7M866.0 338.38h0.6M867.3 338.38h1.8M869.7 338.38h3.7M821.1 339.61h3.1M824.8 339.61h5.5M821.1 340.84h2.5M824.2 340.84h5.5M830.4 340.84h8.6M839.6 340.84h0.6M824.2 342.07h6.8M831.6 342.07h5.5M837.7 342.07h0.6M824.2 343.30h11.1M840.8 343.30h0.6M824.2 344.53h12.9M837.7 344.53h6.1M844.5 344.53h0.6M824.2 345.76h8.6M833.4 345.76h1.2M835.3 345.76h0.6M824.2 346.99h7.4M821.1 349.46h0.6M822.4 349.46h3.1M826.0 349.46h2.5M829.1 349.46h6.1M821.1 350.69h2.5M824.2 350.69h6.8M831.6 350.69h5.5M837.7 350.69h0.6M824.2 351.92h8.0M837.1 351.92h0.6M824.2 353.15h7.4M840.2 353.15h0.6M824.2 354.38h11.1M835.9 354.38h2.5M839.0 354.38h0.6M824.2 355.61h9.2M834.0 355.61h4.3M839.0 355.61h0.6M824.2 356.84h12.3M837.1 356.84h0.6M838.4 356.84h0.6M824.2 358.07h13.5M838.4 358.07h0.6M839.6 358.07h0.6M824.2 359.30h14.1M839.0 359.30h1.8M841.4 359.30h0.6M824.2 360.53h7.4M832.2 360.53h1.8M834.7 360.53h11.1M846.3 360.53h0.6M824.2 361.76h11.1M835.9 361.76h1.8M845.7 361.76h6.1M852.5 361.76h6.8M859.9 361.76h6.1M866.6 361.76h6.1M821.1 364.23h0.6M822.4 364.23h3.1M826.0 364.23h1.8M828.5 364.23h1.8M831.0 364.23h2.5M821.1 365.46h4.9M826.7 365.46h3.1M830.4 365.46h17.8M821.1 366.69h1.8M837.1 399.93h6.8M848.8 399.93h6.8M821.1 403.62h1.8M821.1 404.85h0.6M822.4 404.85h9.8M832.8 404.85h1.8M835.3 404.85h4.9M840.8 404.85h4.3M845.7 404.85h5.5M824.8 406.08h1.2M826.7 406.08h9.8M837.1 406.08h0.6M826.0 407.31h1.2M832.8 407.31h1.2M837.7 407.31h0.6M826.0 408.54h1.2M827.9 408.54h5.5M834.0 408.54h0.6M826.0 409.77h1.8M828.5 409.77h15.4M844.5 409.77h0.6M826.0 411.00h3.1M829.7 411.00h1.8M832.2 411.00h3.1M835.9 411.00h1.2M837.7 411.00h0.6M826.0 412.24h1.2M827.9 412.24h11.7M840.2 412.24h0.6M826.0 413.47h19.1M821.1 414.70h1.8M844.5 447.94h9.2M868.5 447.94h11.7M847.0 451.63h1.2M821.1 452.86h1.8M821.1 454.09h0.6M822.4 454.09h3.1M826.0 454.09h6.8M833.4 454.09h1.8M835.9 454.09h2.5M839.0 454.09h8.0M824.8 455.32h1.2M826.7 455.32h9.8M837.1 455.32h0.6M826.0 456.55h12.3M847.0 456.55h0.6M826.0 457.78h11.1M837.7 457.78h4.9M843.3 457.78h0.6M826.0 459.01h12.9M839.6 459.01h1.2M841.4 459.01h0.6M826.0 460.25h1.2M832.8 460.25h1.2M837.7 460.25h0.6M826.0 461.48h7.4M843.3 461.48h0.6M826.0 462.71h2.5M829.1 462.71h0.6M830.4 462.71h0.6M826.0 463.94h1.2M827.9 463.94h9.8M824.8 466.40h1.2M826.7 466.40h6.1M833.4 466.40h0.6M826.0 467.63h1.2M832.8 467.63h1.2M837.7 467.63h0.6M826.0 468.86h3.1M829.7 468.86h9.8M840.2 468.86h0.6M826.0 470.09h12.3M847.0 470.09h0.6M826.0 471.32h11.1M837.7 471.32h4.9M843.3 471.32h0.6M826.0 472.56h12.9M839.6 472.56h1.2M841.4 472.56h0.6M826.0 473.79h2.5M829.1 473.79h0.6M830.4 473.79h0.6M826.0 475.02h1.2M827.9 475.02h5.5M821.1 477.48h0.6M822.4 477.48h3.7M826.7 477.48h2.5M829.7 477.48h3.7M834.0 477.48h6.8M841.4 477.48h1.2M843.3 477.48h5.5M821.1 478.71h5.5M827.3 478.71h2.5M830.4 478.71h1.2M832.2 478.71h6.2M839.0 478.71h4.9M844.5 478.71h2.5M847.6 478.71h6.2M854.3 478.71h2.5M857.4 478.71h1.2M859.3 478.71h5.5M865.4 478.71h0.6M821.1 479.94h5.5M827.3 479.94h2.5M830.4 479.94h1.8M832.8 479.94h0.6M834.7 479.94h0.6M844.5 479.94h9.2M821.1 482.40h0.6M822.4 482.40h3.1M826.0 482.40h1.8M828.5 482.40h3.1M821.1 483.63h4.9M826.7 483.63h3.1M839.0 483.63h9.2M821.1 484.87h1.8M835.3 520.56h6.8M821.1 524.26h1.8M821.1 525.49h2.5M824.2 525.49h0.6M835.3 525.49h0.6M836.5 525.49h0.6M837.7 525.49h4.9M821.1 527.95h0.6M822.4 527.95h4.3M827.3 527.95h4.3M824.8 529.18h1.2M826.7 529.18h9.2M836.5 529.18h0.6M826.0 530.41h1.2M832.8 530.41h1.2M834.7 530.41h4.9M840.2 530.41h0.6M826.0 531.64h14.8M841.4 531.64h0.6M826.0 532.87h9.8M836.5 532.87h2.5M839.6 532.87h0.6M826.0 534.11h9.8M836.5 534.11h2.5M839.6 534.11h0.6M826.0 535.34h1.2M827.9 535.34h11.1M821.1 537.80h0.6M822.4 537.80h4.3M827.3 537.80h5.5M824.8 539.03h1.2M826.7 539.03h10.5M837.7 539.03h0.6M826.0 540.26h1.2M832.8 540.26h1.2M834.7 540.26h11.1M846.3 540.26h0.6M826.0 541.49h1.2M832.8 541.49h1.2M834.7 541.49h11.1M846.3 541.49h0.6M826.0 542.72h4.3M831.0 542.72h1.2M832.8 542.72h4.9M838.4 542.72h0.6M839.6 542.72h0.6M826.0 543.95h6.8M833.4 543.95h1.2M835.3 543.95h4.3M840.2 543.95h1.8M842.7 543.95h0.6M843.9 543.95h3.1M847.6 543.95h0.6M826.0 545.18h6.8M833.4 545.18h1.2M835.3 545.18h4.3M840.2 545.18h1.8M842.7 545.18h0.6M843.9 545.18h2.5M847.0 545.18h0.6M826.0 546.42h1.2M827.9 546.42h5.5M821.1 547.65h1.8M837.7 567.34h0.6M835.3 571.04h6.8M829.1 572.27h14.8M848.8 572.27h17.2M835.3 574.73h6.8M847.0 574.73h19.7M821.1 578.42h1.8M821.1 579.65h2.5M824.2 579.65h1.2M826.0 579.65h1.8M828.5 579.65h5.5M834.7 579.65h0.6M835.9 579.65h1.8M838.4 579.65h6.8M845.7 579.65h3.1M849.4 579.65h1.8M851.9 579.65h4.3M857.4 579.65h1.2M859.3 579.65h0.6M861.7 579.65h1.2M864.2 579.65h11.7M876.5 579.65h1.8M880.2 579.65h3.8M821.1 582.11h4.9M826.7 582.11h3.1M830.4 582.11h8.6M839.6 582.11h4.9M845.1 582.11h13.5M859.9 582.11h6.8M867.3 582.11h3.1M870.9 582.11h6.2M821.1 583.35h1.8M837.7 594.42h0.6M835.3 598.12h6.8M847.0 598.12h19.7M835.3 600.58h9.8M826.7 601.81h11.1M821.1 605.50h1.8M821.1 606.73h1.8M823.6 606.73h9.8M834.0 606.73h7.4M842.0 606.73h6.1M848.8 606.73h18.5M868.5 606.73h0.6M869.7 606.73h4.9M821.1 609.20h4.9M826.7 609.20h3.1M830.4 609.20h5.5M836.5 609.20h3.1M840.2 609.20h4.9M845.7 609.20h4.9M851.3 609.20h9.2M861.1 609.20h4.9M866.6 609.20h0.6M867.9 609.20h8.6M821.1 611.66h2.5M824.2 611.66h1.2M826.0 611.66h1.8M829.1 611.66h8.6M838.4 611.66h0.6M839.6 611.66h1.8M842.0 611.66h1.2M843.9 611.66h3.1M847.6 611.66h4.3M852.5 611.66h3.1M856.2 611.66h0.6M829.1 612.89h2.5M832.2 612.89h1.2M834.0 612.89h1.8M836.5 612.89h4.3M841.4 612.89h5.5M847.6 612.89h1.8M850.0 612.89h4.3M855.6 612.89h1.2M857.4 612.89h0.6M829.1 614.12h9.2M839.6 614.12h1.2M841.4 614.12h1.8M844.5 614.12h3.7M848.8 614.12h1.2M851.3 614.12h1.8M853.7 614.12h3.1M829.1 615.35h3.7M835.3 615.35h3.1M839.6 615.35h2.5M843.3 615.35h6.8M850.6 615.35h1.2M852.5 615.35h2.5M855.6 615.35h4.3M860.5 615.35h0.6M829.1 616.58h3.7M821.1 619.04h4.9M826.7 619.04h1.2M828.5 619.04h3.1M832.2 619.04h1.2M834.0 619.04h2.5M837.1 619.04h1.2M839.0 619.04h4.3M843.9 619.04h6.1M850.6 619.04h1.2M852.5 619.04h9.8M821.1 620.28h1.8M837.7 673.21h0.6M827.3 684.29h4.3M821.1 689.21h1.8M821.1 690.44h2.5M824.2 690.44h0.6M835.3 690.44h0.6M836.5 690.44h0.6M837.7 690.44h4.9M824.8 692.90h1.2M832.8 692.90h0.6M824.8 694.14h1.2M826.7 694.14h8.6M835.9 694.14h0.6M824.8 695.37h1.2M826.7 695.37h4.3M831.6 695.37h0.6M824.8 696.60h1.2M826.7 696.60h4.9M832.2 696.60h0.6M824.8 697.83h3.7M821.1 699.06h1.8" stroke="#e6db74" stroke-width="1.00" stroke-opacity="0.65" stroke-dasharray="0.9 0.35" fill="none"/>
<path d="M831.0 178.35h4.3" stroke="#66d9ef" stroke-width="1.00" stroke-opacity="0.60" stroke-dasharray="0.9 0.35" fill="none"/>
<path d="M824.8 189.43h17.2M821.1 193.12h3.7M821.1 196.81h4.3M821.1 200.50h4.3M824.8 214.05h16.0M821.1 217.74h3.7M821.1 220.20h4.3M821.1 223.89h4.3M824.8 238.66h18.5M821.1 242.36h3.7M821.1 246.05h4.3M821.1 249.74h4.3M824.8 269.44h12.9M821.1 273.13h3.7M821.1 278.06h4.3M821.1 281.75h4.3M824.8 310.06h14.1M821.1 313.76h3.7M821.1 319.91h4.3M821.1 323.60h4.3M824.8 387.62h16.6M821.1 391.31h3.7M821.1 398.70h4.3M821.1 402.39h4.3M824.8 434.39h16.6M821.1 438.09h3.7M821.1 446.70h4.3M821.1 450.40h4.3M824.8 508.25h14.8M821.1 511.95h3.7M821.1 519.33h4.3M821.1 523.03h4.3M824.8 564.88h12.9M821.1 569.80h3.7M821.1 573.50h4.3M821.1 577.19h4.3M824.8 591.96h14.8M821.1 596.89h3.7M821.1 599.35h4.3M821.1 604.27h4.3M824.8 670.75h11.1M821.1 675.67h3.7M821.1 683.06h4.3M821.1 687.98h4.3" stroke="#66d9ef" stroke-width="1.00" stroke-opacity="0.60" stroke-dasharray="0.9 0.35" fill="none"/>
<path d="M827.3 227.59h1.2" stroke="#ae81ff" stroke-width="1.00" stroke-opacity="0.60" stroke-dasharray="0.9 0.35" fill="none"/>
</svg>
<div id="edclip">
<div style="position:absolute;left:-112px;top:-97px;width:967px;height:1199px">
<div class="ln" style="top:99.10px">48</div><div class="cl" style="top:99.10px"><span class="w">log</span><span class="p">.</span><span class="w">info</span><span class="y"> &quot;&quot;&quot;\</span></div>
<div class="ln" style="top:114.55px">49</div><div class="cl" style="top:114.55px"><span class="y">C A L L I N G S  -  N F    v 1.0</span></div>
<div class="ln" style="top:130.00px">50</div><div class="cl" style="top:130.00px"><span class="y">================================</span></div>
<div class="ln" style="top:145.45px">51</div><div class="cl" style="top:145.45px"><span class="y">genome   : </span><span class="w">$params</span><span class="p">.</span><span class="w">genome</span></div>
<div class="ln" style="top:160.90px">52</div><div class="cl" style="top:160.90px"><span class="y">reads    : </span><span class="w">$params</span><span class="p">.</span><span class="w">reads</span></div>
<div class="ln" style="top:176.35px">53</div><div class="cl" style="top:176.35px"><span class="y">variants : </span><span class="w">$params</span><span class="p">.</span><span class="w">variants</span></div>
<div class="ln" style="top:191.80px">54</div><div class="cl" style="top:191.80px"><span class="y">blacklist: </span><span class="w">$params</span><span class="p">.</span><span class="w">blacklist</span></div>
<div class="ln" style="top:207.25px">55</div><div class="cl" style="top:207.25px"><span class="y">results  : </span><span class="w">$params</span><span class="p">.</span><span class="w">results</span></div>
<div class="ln" style="top:222.70px">56</div><div class="cl" style="top:222.70px"><span class="y">gatk     : </span><span class="w">$params</span><span class="p">.</span><span class="w">gatk</span></div>
<div class="ln" style="top:238.15px">57</div><div class="cl" style="top:238.15px"><span class="y">&quot;&quot;&quot;</span></div>
<div class="ln" style="top:253.60px">58</div><div class="cl" style="top:253.60px"></div>
<div class="ln" style="top:269.05px">59</div><div class="cl" style="top:269.05px"><span class="m">/*</span></div>
<div class="ln" style="top:284.50px">60</div><div class="cl" style="top:284.50px"><span class="m"> *  Parse the input parameters</span></div>
<div class="ln" style="top:299.95px">61</div><div class="cl" style="top:299.95px"><span class="m"> */</span></div>
<div class="ln" style="top:315.40px">62</div><div class="cl" style="top:315.40px"></div>
<div class="ln" style="top:330.85px">63</div><div class="cl" style="top:330.85px"><span class="w">GATK            </span><span class="p">=</span><span class="w"> params</span><span class="p">.</span><span class="w">gatk_launch</span></div>
<div class="ln" style="top:346.30px">64</div><div class="cl" style="top:346.30px"><span class="w">genome_file     </span><span class="p">=</span><span class="w"> file(params</span><span class="p">.</span><span class="w">genome)</span></div>
<div class="ln" style="top:361.75px">65</div><div class="cl" style="top:361.75px"><span class="w">variants_file   </span><span class="p">=</span><span class="w"> file(params</span><span class="p">.</span><span class="w">variants)</span></div>
<div class="ln" style="top:377.20px">66</div><div class="cl" style="top:377.20px"><span class="w">blacklist_file  </span><span class="p">=</span><span class="w"> file(params</span><span class="p">.</span><span class="w">blacklist)</span></div>
<div class="ln" style="top:392.65px">67</div><div class="cl" style="top:392.65px"><span class="w">reads_ch        </span><span class="p">=</span><span class="w"> </span><span class="i">Channel</span><span class="p">.</span><span class="w">fromFilePairs(params</span><span class="p">.</span><span class="w">reads)</span></div>
<div class="ln" style="top:408.10px">68</div><div class="cl" style="top:408.10px"></div>
<div class="ln" style="top:423.55px">69</div><div class="cl" style="top:423.55px"></div>
<div class="ln" style="top:439.00px">70</div><div class="cl" style="top:439.00px"><span class="m">/**********</span></div>
<div class="ln" style="top:454.45px">71</div><div class="cl" style="top:454.45px"><span class="m"> * PART 1: Data </span><span class="sel">preparation</span></div>
<div class="ln" style="top:469.90px">72</div><div class="cl" style="top:469.90px"><span class="m"> *</span></div>
<div class="ln" style="top:485.35px">73</div><div class="cl" style="top:485.35px"><span class="m"> * Process 1A: Create a FASTA genome index (.fai) with samtools for GATK</span></div>
<div class="ln" style="top:500.80px">74</div><div class="cl" style="top:500.80px"><span class="m"> */</span></div>
<div class="ln" style="top:516.25px">75</div><div class="cl" style="top:516.25px"></div>
<div class="ln" style="top:531.70px">76</div><div class="cl" style="top:531.70px"><span class="w">process </span><span class="c">&#x27;1A_prepare_genome_samtools&#x27;</span><span class="w"> {</span></div>
<div class="ln" style="top:547.15px">77</div><div class="cl" style="top:547.15px"><span class="w">  tag &quot;$genome</span><span class="p">.</span><span class="w">baseName&quot;</span></div>
<div class="ln" style="top:562.60px">78</div><div class="cl" style="top:562.60px"></div>
<div class="ln" style="top:578.05px">79</div><div class="cl" style="top:578.05px"><span class="c">  input:</span></div>
<div class="ln" style="top:593.50px">80</div><div class="cl" style="top:593.50px"><span class="w">      file genome from genome_file</span></div>
<div class="ln" style="top:608.95px">81</div><div class="cl" style="top:608.95px"></div>
<div class="ln" style="top:624.40px">82</div><div class="cl" style="top:624.40px"><span class="c">  output:</span></div>
<div class="ln" style="top:639.85px">83</div><div class="cl" style="top:639.85px"><span class="w">      file &quot;</span><span class="p">${</span><span class="w">genome</span><span class="p">}</span><span class="y">.fai</span><span class="w">&quot; into genome_index_ch</span></div>
<div class="ln" style="top:655.30px">84</div><div class="cl" style="top:655.30px"></div>
<div class="ln" style="top:670.75px">85</div><div class="cl" style="top:670.75px"><span class="c">  script:</span></div>
<div class="ln" style="top:686.20px">86</div><div class="cl" style="top:686.20px"><span class="y">  &quot;&quot;&quot;</span></div>
<div class="ln" style="top:701.65px">87</div><div class="cl" style="top:701.65px"><span class="y">  samtools faidx </span><span class="p">${</span><span class="w">genome</span><span class="p">}</span></div>
<div class="ln" style="top:717.10px">88</div><div class="cl" style="top:717.10px"><span class="y">  &quot;&quot;&quot;</span></div>
<div class="ln" style="top:732.55px">89</div><div class="cl" style="top:732.55px"><span class="w">}</span></div>
<div class="ln" style="top:748.00px">90</div><div class="cl" style="top:748.00px"></div>
<div class="ln" style="top:763.45px">91</div><div class="cl" style="top:763.45px"></div>
<div class="ln" style="top:778.90px">92</div><div class="cl" style="top:778.90px"><span class="m">/*</span></div>
<div class="ln" style="top:794.35px">93</div><div class="cl" style="top:794.35px"><span class="m"> * Process 1B: Create a FASTA genome sequence dictionary with Picard for GATK</span></div>
<div class="ln" style="top:809.80px">94</div><div class="cl" style="top:809.80px"><span class="m"> */</span></div>
<div class="ln" style="top:825.25px">95</div><div class="cl" style="top:825.25px"></div>
<div class="ln" style="top:840.70px">96</div><div class="cl" style="top:840.70px"><span class="w">process </span><span class="c">&#x27;1B_prepare_genome_picard&#x27;</span><span class="w"> {</span></div>
<div class="ln" style="top:856.15px">97</div><div class="cl" style="top:856.15px"><span class="w">  tag &quot;$genome</span><span class="p">.</span><span class="w">baseName&quot;</span></div>
<div class="ln" style="top:871.60px">98</div><div class="cl" style="top:871.60px"></div>
<div class="ln" style="top:887.05px">99</div><div class="cl" style="top:887.05px"><span class="c">  input:</span></div>
<div class="ln" style="top:902.50px">100</div><div class="cl" style="top:902.50px"><span class="w">      file genome from genome_file</span></div>
<div class="ln" style="top:917.95px">101</div><div class="cl" style="top:917.95px"><span class="c">  output:</span></div>
<div class="ln" style="top:933.40px">102</div><div class="cl" style="top:933.40px"><span class="w">      file &quot;</span><span class="p">${</span><span class="w">genome.baseName</span><span class="p">}</span><span class="y">.dict</span><span class="w">&quot; into genome_dict_ch</span></div>
<div class="ln" style="top:948.85px">103</div><div class="cl" style="top:948.85px"></div>
<div class="ln" style="top:964.30px">104</div><div class="cl" style="top:964.30px"><span class="c">  script:</span></div>
<div class="ln" style="top:979.75px">105</div><div class="cl" style="top:979.75px"><span class="y">  &quot;&quot;&quot;</span></div>
<div class="ln" style="top:995.20px">106</div><div class="cl" style="top:995.20px"><span class="y">  PICARD=`which picard.jar`</span></div>
<div class="ln" style="top:1010.65px">107</div><div class="cl" style="top:1010.65px"><span class="y">  java -jar </span><span class="u">\$</span><span class="y">PICARD CreateSequenceDictionary R= </span><span class="w">$genome</span><span class="y"> O= </span><span class="p">${</span><span class="w">genome.baseName</span><span class="p">}</span><span class="y">.dict</span></div>
<div class="ln" style="top:1026.10px">108</div><div class="cl" style="top:1026.10px"><span class="y">  &quot;&quot;&quot;</span></div>
<div class="ln" style="top:1041.55px">109</div><div class="cl" style="top:1041.55px"><span class="w">}</span></div>
<div class="ln" style="top:1057.00px">110</div><div class="cl" style="top:1057.00px"></div>
<div class="ln" style="top:1072.45px">111</div><div class="cl" style="top:1072.45px"></div>
</div>
</div>
<div id="cursor"></div>
<div id="tabshadow"></div>
<div id="scroll"></div>
<div id="slider"></div>
<div style="position:absolute;left:885px;top:218.6px;width:12px;height:1.6px;background:#d0d0d0"></div>
<div id="status"></div>
<svg class="ic" width="967" height="1199" style="pointer-events:none">
 <g fill="#a9a9a5" transform="translate(90.9 1058.7)">
  <path d="M-2.38 -5.18 L-1.28 -5.55 L-1.20 -8.01 L1.20 -8.01 L1.28 -5.55 L1.98 -5.35 L3.02 -4.83 L4.82 -6.51 L6.51 -4.82 L4.83 -3.02 L5.18 -2.38 L5.55 -1.28 L8.01 -1.20 L8.01 1.20 L5.55 1.28 L5.35 1.98 L4.83 3.02 L6.51 4.82 L4.82 6.51 L3.02 4.83 L2.38 5.18 L1.28 5.55 L1.20 8.01 L-1.20 8.01 L-1.28 5.55 L-1.98 5.35 L-3.02 4.83 L-4.82 6.51 L-6.51 4.82 L-4.83 3.02 L-5.18 2.38 L-5.55 1.28 L-8.01 1.20 L-8.01 -1.20 L-5.55 -1.28 L-5.35 -1.98 L-4.83 -3.02 L-6.51 -4.82 L-4.82 -6.51 L-3.02 -4.83Z" stroke="#a9a9a5" stroke-width="0.6" stroke-linejoin="round"/>
 </g>
 <circle cx="90.9" cy="1058.7" r="2.4" fill="none" stroke="#272822" stroke-width="1.3"/>
 <g fill="none" stroke="#fff" stroke-width="1.1">
  <circle cx="83.4" cy="1083.6" r="1.3"/><circle cx="83.4" cy="1091.5" r="1.3"/><circle cx="88.5" cy="1085.3" r="1.3"/>
  <path d="M83.4 1084.9V1090.2M88.3 1086.6C88 1089 84.5 1088.6 83.6 1090.3"/>
  <path d="M145 1086.5A4 4 0 0 1 152.2 1085.5M152.4 1088.6A4 4 0 0 1 145.2 1089.7" stroke-width="1.3"/>
 </g>
 <g fill="#fff">
  <path d="M153.4 1083.2V1086.6H150Z"/><path d="M144 1092V1088.6H147.4Z"/>
  <circle cx="168.6" cy="1089.5" r="4.6"/>
  <path d="M192.3 1084.9L196.9 1093.7H187.7Z"/>
  <circle cx="877.4" cy="1089.5" r="6.2"/>
 </g>
 <path d="M166.6 1087.5L170.6 1091.5M170.6 1087.5L166.6 1091.5" stroke="#414339" stroke-width="1.1"/>
 <path d="M192.3 1087.3V1090.8M192.3 1091.8V1092.8" stroke="#414339" stroke-width="1.1"/>
 <g fill="#414339"><circle cx="875.2" cy="1087.2" r="0.9"/><circle cx="879.5" cy="1087.2" r="0.9"/></g>
 <path d="M873.9 1090.6Q877.4 1094.6 880.9 1090.6" fill="none" stroke="#414339" stroke-width="1"/>
</svg>
<div class="st" style="left:92.5px">master*</div>
<div class="st" style="left:177.5px">0</div>
<div class="st" style="left:201.3px">0</div>
<div class="st" style="left:608px">Ln 71, Col 28</div>
<div class="st" style="left:684px">Spaces: 4</div>
<div class="st" style="left:745.5px">UTF-8</div>
<div class="st" style="left:789.5px">LF</div>
<div class="st" style="left:814px">Nextflow</div>
</body></html>
